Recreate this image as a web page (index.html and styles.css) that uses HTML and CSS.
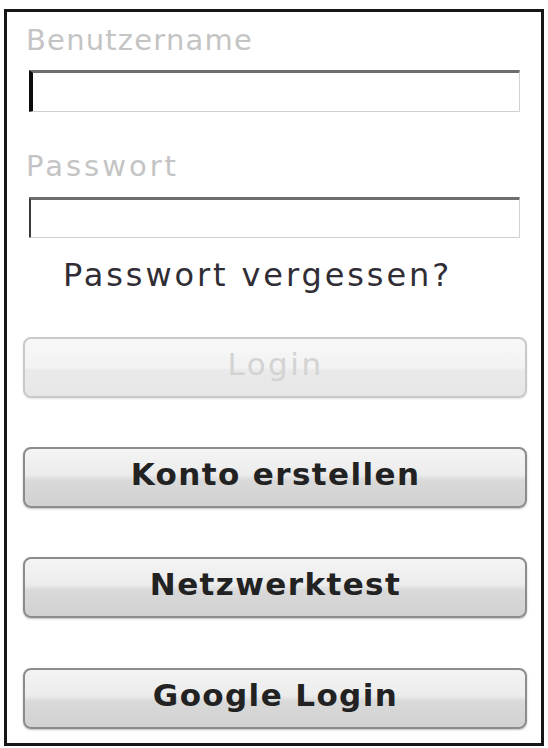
FILE: index.html
```html
<!DOCTYPE html>
<html lang="de">
<head>
<meta charset="utf-8">
<title>Login</title>
<link rel="stylesheet" href="styles.css">
</head>
<body>
<div class="frame">
  <form class="form">
    <label class="label label-user" for="user">Benutzername</label>
    <input class="field field-focus" id="user" type="text">
    <label class="label label-pass" for="pass">Passwort</label>
    <input class="field field-pass" id="pass" type="password">
    <a class="forgot">Passwort vergessen?</a>
    <button type="button" class="btn btn-disabled btn-first">Login</button>
    <button type="button" class="btn">Konto erstellen</button>
    <button type="button" class="btn">Netzwerktest</button>
    <button type="button" class="btn btn-last">Google Login</button>
  </form>
</div>
</body>
</html>
```
FILE: styles.css
```css
html, body {
  margin: 0;
  padding: 0;
  background: #ffffff;
}

body {
  font-family: "DejaVu Sans", "Liberation Sans", sans-serif;
  width: 548px;
  height: 748px;
  overflow: hidden;
}

.frame {
  box-sizing: border-box;
  margin: 9px 4px 0 4px;
  width: 540px;
  height: 737px;
  border: 3px solid #161616;
  background: #ffffff;
}

.form {
  display: flex;
  flex-direction: column;
  align-items: flex-start;
  margin: 0;
}

.label {
  display: block;
  font-size: 29px;
  line-height: 28px;
  height: 28px;
  letter-spacing: 1.2px;
  color: #c4c4c4;
  margin-left: 19px;
}

.label-user {
  margin-top: 14px;
}

.label-pass {
  margin-top: 40px;
  letter-spacing: 3px;
}

.field {
  box-sizing: border-box;
  display: block;
  width: 491px;
  height: 42px;
  margin: 16px 0 0 22px;
  padding: 0;
  background: #ffffff;
  border-style: solid;
  border-width: 3px 1px 1px 2px;
  border-color: #6e6e6e #d2d2d2 #cfcfcf #555555;
  border-radius: 1px;
  outline: none;
  font-size: 20px;
}

.field-focus {
  border-left: 4px solid #0c0c0c;
}

.field-pass {
  height: 41px;
  margin-top: 17px;
  border-left-color: #3a3a3a;
}

.forgot {
  display: block;
  margin: 21px 0 0 56px;
  font-size: 32px;
  line-height: 32px;
  height: 32px;
  letter-spacing: 2.9px;
  color: #312d35;
  text-decoration: none;
}

.btn {
  box-sizing: border-box;
  display: flex;
  align-items: center;
  justify-content: center;
  width: 504px;
  height: 61px;
  margin: 49px 0 0 16px;
  padding: 0 0 7px 1px;
  font-family: "DejaVu Sans", "Liberation Sans", sans-serif;
  font-size: 31px;
  line-height: 31px;
  font-weight: bold;
  letter-spacing: 1.4px;
  color: #222222;
  border: 2px solid #8c8c8c;
  border-radius: 8px;
  background: linear-gradient(to bottom, #f4f4f4 0%, #ececec 45%, #d9d9d9 55%, #d1d1d1 100%);
  box-shadow: 0 1px 2px rgba(0, 0, 0, 0.25);
}

.btn-first {
  margin-top: 46px;
}

.btn-last {
  margin-top: 50px;
}

.btn-disabled {
  font-weight: normal;
  letter-spacing: 2.5px;
  color: #d3d3d3;
  border-color: #c9c9c9;
  background: linear-gradient(to bottom, #f8f8f8 0%, #f2f2f2 50%, #eaeaea 55%, #e6e6e6 100%);
  box-shadow: 0 1px 2px rgba(0, 0, 0, 0.12);
}
```
